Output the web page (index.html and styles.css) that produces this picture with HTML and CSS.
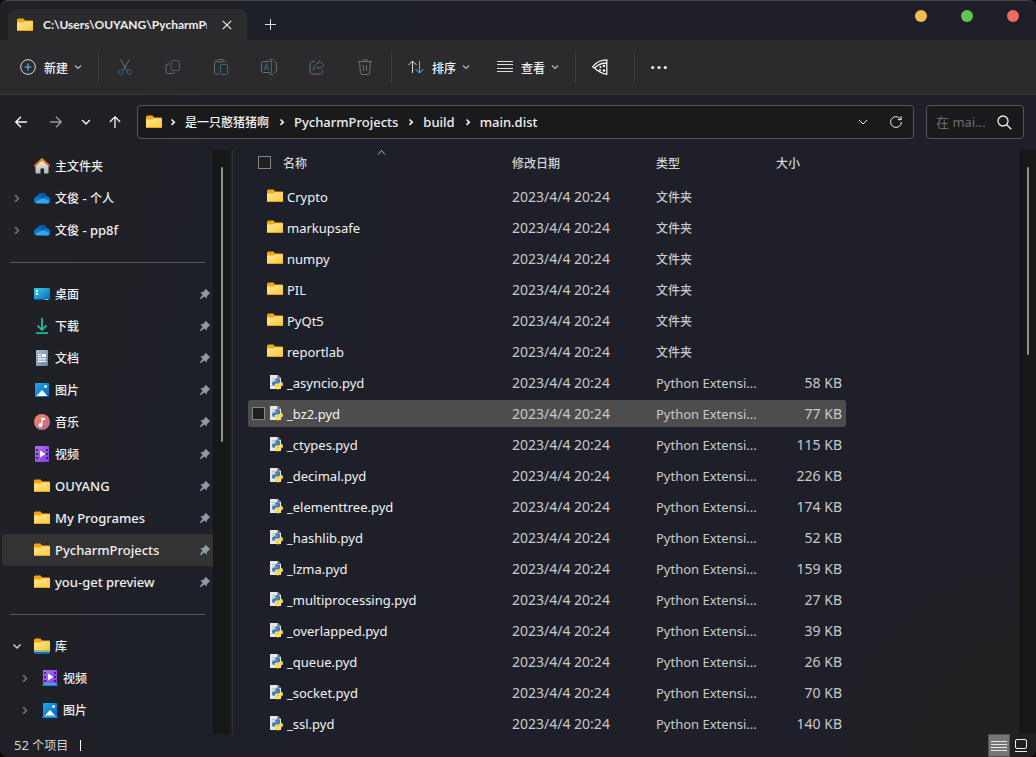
FILE: index.html
```html
<!DOCTYPE html>
<html lang="zh-CN">
<head>
<meta charset="utf-8">
<title>main.dist</title>
<link rel="stylesheet" href="styles.css">
</head>
<body>
<svg class="defs" aria-hidden="true">
  <defs>
    <linearGradient id="gFolder" x1="0" y1="0" x2="1" y2="1"><stop offset="0" stop-color="#ffe79c"/><stop offset="1" stop-color="#fdc735"/></linearGradient>
    <linearGradient id="gDesk" x1="0" y1="0" x2="1" y2="1"><stop offset="0" stop-color="#35d0ea"/><stop offset="1" stop-color="#0c62b8"/></linearGradient>
    <linearGradient id="gDoc" x1="0" y1="0" x2="1" y2="1"><stop offset="0" stop-color="#a9bfd3"/><stop offset="1" stop-color="#6584a6"/></linearGradient>
    <linearGradient id="gPic" x1="0" y1="0" x2="1" y2="1"><stop offset="0" stop-color="#22a7ee"/><stop offset="1" stop-color="#0864b8"/></linearGradient>
    <linearGradient id="gMusic" x1="0" y1="0" x2="1" y2="1"><stop offset="0" stop-color="#f58b52"/><stop offset="1" stop-color="#b9639f"/></linearGradient>
    <linearGradient id="gVideo" x1="0" y1="0" x2="1" y2="1"><stop offset="0" stop-color="#b171f0"/><stop offset="1" stop-color="#7f3fe0"/></linearGradient>
    <linearGradient id="gHome" x1="0" y1="0" x2="0" y2="1"><stop offset="0" stop-color="#eeeeee"/><stop offset="1" stop-color="#b4b4b4"/></linearGradient>
    <linearGradient id="gRoof" x1="0" y1="0" x2="0" y2="1"><stop offset="0" stop-color="#fb9a1c"/><stop offset="1" stop-color="#d4500f"/></linearGradient>
  </defs>
  <symbol id="folder" viewBox="0 0 16 16"><path d="M0 3q0-1.500 1.500-1.500H6.500L8 3.500h7q1 0 1 1V10H0z" fill="#f3a90c"/><path d="M0 5.500h6.500L8 4.200h7.500q.5 0 .5.5V13q0 1-1 1H1q-1 0-1-1z" fill="url(#gFolder)"/><path d="M0 13h16q0 1-1 1H1q-1 0-1-1z" fill="#e9a520"/></symbol>
  <symbol id="library" viewBox="0 0 16 16"><use href="#folder" y="-1"/><path d="M0 13h16v1.500H0z" fill="#45c6f3"/><path d="M1 14.500h14V16H1z" fill="#0a6dbd"/></symbol>
  <symbol id="home" viewBox="0 0 16 16"><path d="M1.500 7.500 8 2l6.500 5.500V14.500q0 1-1 1H10v-5H6.500v5H2.500q-1 0-1-1z" fill="url(#gHome)"/><path d="M8 0 0 7v2.300L8 2.800l8 6.500V7z" fill="url(#gRoof)"/></symbol>
  <symbol id="cloud" viewBox="0 0 16 16"><path d="M3.500 13.500Q0 13 0 10 0 7 3 6.500 4.500 3 8 3q4 0 5 3.500 3 .4 3 3.400 0 3.600-3 3.600z" fill="#1074d0"/><path d="M4 5.500Q6 2.500 9 3q3.200.5 4 3.600L8 8.500z" fill="#0a59a9"/><path d="M2.500 13.300q-1.200-.6-1.500-1.600L9.500 8l6 3.300q-.4 2.200-2.700 2.200z" fill="#2fa6ee"/></symbol>
  <symbol id="desktop" viewBox="0 0 16 16"><rect y="2" width="16" height="12" rx="1" fill="url(#gDesk)"/><path d="M0 13h10v1H1q-1 0-1-1z" fill="#0b549c"/><path d="M2 4h2v2H2zM2 7h2v2H2zM11 13h1v1h-1zM13 13h1v1h-1z" fill="#fff"/></symbol>
  <symbol id="download" viewBox="0 0 16 16"><path d="M3.500 7.500 8 12l4.500-4.500" fill="none" stroke="#24b593" stroke-width="1.800"/><path d="M2 14.200h12V16H2z" fill="#20b498"/><path d="M7.100 0h1.800v12H7.100z" fill="#2fbf91"/></symbol>
  <symbol id="document" viewBox="0 0 16 16"><rect x="2" width="12" height="16" rx="1" fill="url(#gDoc)"/><path d="M4 4h3v1H4zM4 6h3v1H4zM8 4h4v3H8zM4 8.300h8v1.200H4zM4 10.800h8V12H4z" fill="#fff"/></symbol>
  <symbol id="picture" viewBox="0 0 16 16"><rect x="1" y="1" width="14" height="14" rx="1" fill="url(#gPic)"/><path d="m2.500 14 5.500-6 5.500 6z" fill="#fff"/><circle cx="11.500" cy="4.500" r="1.500" fill="#e6f6ff"/></symbol>
  <symbol id="music" viewBox="0 0 16 16"><circle cx="8" cy="8" r="8" fill="url(#gMusic)"/><path d="M7.300 3.500 11 4.300v2L8.500 5.800V11a2 2 0 1 1-1.200-1.700z" fill="#fff"/></symbol>
  <symbol id="video" viewBox="0 0 16 16"><rect x="1" width="14" height="16" rx="1" fill="url(#gVideo)"/><path d="M2 3h2v2H2zM2 7h2v2H2zM2 11h2v2H2zM12 3h2v2h-2zM12 7h2v2h-2zM12 11h2v2h-2z" fill="#43207d"/><path d="m6 4.500 5.500 3.500L6 11.500z" fill="#fff"/></symbol>
  <symbol id="lib-video" viewBox="0 0 16 16"><use href="#video" y="-1"/><path d="M1 13.500h14l1 2.500H0z" fill="#1186d4"/><path d="M2 13.500h12v1H2z" fill="#5ccdf6"/></symbol>
  <symbol id="lib-picture" viewBox="0 0 16 16"><use href="#picture" y="0"/><path d="M1 13.500h14l1 2.500H0z" fill="#1186d4"/><path d="M2 13.500h12v1H2z" fill="#5ccdf6"/></symbol>
  <symbol id="pin" viewBox="0 0 12 12"><path d="M6.700.8 11.300 5.400 10 6l-2 2-.2 2.600L5.300 8.400 1.500 11.200.8 10.500l2.800-3.800L1.300 4.200 4 4l2-2z" fill="#8f9ba3"/></symbol>
  <symbol id="python" viewBox="0 0 16 16"><path d="M2 1h8l3 3v11H2z" fill="#e8e8e8"/><path d="M9.500.5 13 4H9.500z" fill="#666"/><path d="M4 4h3v1H4zM4 6h2v1H4z" fill="#b9c4cc"/><path d="M7 5.500Q7 4 9.500 4T12 5.500V8q0 1.500-1.500 1.500H8Q6.500 9.500 6.500 12H5.500Q4 11.500 4 9.500T6 7.300h3.500v-.6H7z" fill="#3d7cb3"/><path d="M12 13.500q0 2-2.300 2T7.300 13.700V11.500Q7.300 10 8.800 10h2.400Q12.700 10 12.700 7.700h.8Q15 8.200 15 10.200T13.300 12.600H10v.6h2z" fill="#ffd83d"/></symbol>
  <symbol id="chev-down" viewBox="0 0 8 8"><path d="m1 2.500 3 3 3-3" fill="none" stroke="currentColor" stroke-width="1.200"/></symbol>
  <symbol id="chev-right" viewBox="0 0 8 8"><path d="m2 0.500 3.500 3.500L2 7.500" fill="none" stroke="currentColor" stroke-width="1.500"/></symbol>
  <symbol id="crumb" viewBox="0 0 8 8"><path d="m2.500 1.500 2.800 2.700-2.800 2.700" fill="none" stroke="currentColor" stroke-width="1.600"/></symbol>
</svg>

<div class="window">
  <header class="titlebar">
    <div class="tab">
      <svg class="ico"><use href="#folder"/></svg>
      <span class="tab-title">C:\Users\OUYANG\PycharmProjects</span>
      <button class="plain tab-close" aria-label="关闭标签页"><svg viewBox="0 0 10 10" width="10" height="10"><path d="m.8.800 8.400 8.400M9.200.8.800 9.200" stroke="#eee" stroke-width="1.200" fill="none"/></svg></button>
    </div>
    <button class="plain tab-new" aria-label="新标签页"><svg viewBox="0 0 11 11" width="11" height="11"><path d="M5.500 0v11M0 5.500h11" stroke="#ddd" fill="none"/></svg></button>
    <div class="caption">
      <button class="dot dot-min" aria-label="最小化"></button>
      <button class="dot dot-max" aria-label="最大化"></button>
      <button class="dot dot-close" aria-label="关闭"></button>
    </div>
  </header>

  <div class="toolbar" role="toolbar">
    <button class="plain tool-text"><svg class="ico" viewBox="0 0 16 16" fill="none"><circle cx="8" cy="8" r="7.300" stroke="#ddd"/><path d="M8 4.500v7M4.500 8h7" stroke="#4cc2ff" stroke-width="1.200"/></svg>新建<svg class="chev"><use href="#chev-down"/></svg></button>
    <span class="sep"></span>
    <div class="tools">
      <button class="plain tool" aria-label="剪切" disabled><svg class="ico" viewBox="0 0 16 16" fill="none"><path d="m3.500.5 6.500 11M12.500.5 6 11.500" stroke="#6d6e72"/><circle cx="3.800" cy="13" r="2.300" stroke="#386a88"/><circle cx="12.200" cy="13" r="2.300" stroke="#386a88"/></svg></button>
      <button class="plain tool" aria-label="复制" disabled><svg class="ico" viewBox="0 0 16 16" fill="none"><rect x="6" y="1.500" width="8.500" height="10" rx="2" stroke="#386a88"/><path d="M4 5H3Q1 5 1 7v5.500Q1 14.500 3 14.500h4.500q2 0 2-1.500" stroke="#6d6e72"/></svg></button>
      <button class="plain tool" aria-label="粘贴" disabled><svg class="ico" viewBox="0 0 16 16" fill="none"><path d="M5 2H3Q1.500 2 1.500 3.500v10Q1.500 15 3 15h3M10 2h1.500Q13 2 13 3.500" stroke="#6d6e72"/><rect x="4.500" y=".5" width="6" height="2.500" rx="1" stroke="#6d6e72"/><rect x="7.500" y="5.500" width="7" height="10" rx="1" stroke="#386a88"/></svg></button>
      <button class="plain tool" aria-label="重命名" disabled><svg class="ico" viewBox="0 0 16 16" fill="none"><path d="M9 2.500H2.500Q.5 2.500 .5 4.500v7q0 2 2 2H9M13 2.500q2.500 0 2.500 2v7q0 2-2.500 2" stroke="#6d6e72"/><path d="m3 11.500 2.500-7 2.500 7M4 9h3M10.500 .5v15M8.500 .5h4M8.500 15.500h4" stroke="#386a88"/></svg></button>
      <button class="plain tool" aria-label="共享" disabled><svg class="ico" viewBox="0 0 16 16" fill="none"><path d="M6 2.500H3q-2 0-2 2V13q0 2 2 2h8.500q2 0 2-2v-1.500" stroke="#6d6e72"/><path d="M10 1.500 15 6l-5 4.500V8Q6 8 4 11q.5-6.500 6-7z" stroke="#386a88"/></svg></button>
      <button class="plain tool" aria-label="删除" disabled><svg class="ico" viewBox="0 0 16 16" fill="none"><path d="M1 2.500h14M5.500 2.500Q5.500.5 8 .5t2.500 2M2.500 3l1 11q.1 1.500 1.500 1.500h6q1.400 0 1.500-1.500l1-11M6.500 6v6M9.500 6v6" stroke="#6d6e72"/></svg></button>
    </div>
    <span class="sep"></span>
    <button class="plain tool-text"><svg class="ico" viewBox="0 0 16 16" fill="none"><path d="M4.500 14V2M.5 6l4-4 4 4" stroke="#ddd"/><path d="M11.500 2v12M7.500 10l4 4 4-4" stroke="#4cc2ff"/></svg>排序<svg class="chev"><use href="#chev-down"/></svg></button>
    <button class="plain tool-text tool-view"><svg class="ico" viewBox="0 0 16 16" fill="none"><path d="M0 2.500h16M0 5.500h16M0 9.500h16M0 12.500h16" stroke="#ddd"/></svg>查看<svg class="chev"><use href="#chev-down"/></svg></button>
    <span class="sep"></span>
    <button class="plain tool tool-pizza" aria-label="扩展"><svg class="ico" viewBox="0 0 16 16" fill="none"><path d="M14.800.8Q6 .8 1 7.300q-.3.700.3 1.200Q3 9 4 7.700 8 4 14.800 4zM14.800 1v14.300Q8 14.500 2.300 8.800" stroke="#f2f2f2" stroke-width="1.300"/><circle cx="8.500" cy="8" r="1.100" fill="#fff"/><circle cx="12" cy="7" r="1.200" fill="#fff"/><circle cx="8" cy="11" r="1" fill="#fff"/><circle cx="12" cy="11.500" r="1.300" fill="#fff"/></svg></button>
    <span class="sep"></span>
    <button class="plain tool tool-more" aria-label="更多"><svg class="ico" viewBox="0 0 16 16"><circle cx="1.700" cy="8.500" r="1.600" fill="#eee"/><circle cx="8" cy="8.500" r="1.600" fill="#eee"/><circle cx="14.300" cy="8.500" r="1.600" fill="#eee"/></svg></button>
  </div>

  <nav class="navbar">
    <div class="nav-buttons">
      <button class="plain" aria-label="后退"><svg viewBox="0 0 12 12" width="12" height="12" fill="none"><path d="M12 6H.8M6 .8.8 6 6 11.200" stroke="#f4f4f4" stroke-width="1.400"/></svg></button>
      <button class="plain" aria-label="前进"><svg viewBox="0 0 12 12" width="12" height="12" fill="none"><path d="M0 6h11.200M6 .8 11.200 6 6 11.200" stroke="#97989a" stroke-width="1.400"/></svg></button>
      <button class="plain nav-small" aria-label="最近位置"><svg viewBox="0 0 10 10" width="10" height="10" fill="none"><path d="m1.200 3 3.800 4 3.800-4" stroke="#f0f0f0" stroke-width="1.500"/></svg></button>
      <button class="plain nav-small" aria-label="上移"><svg viewBox="0 0 12 12" width="12" height="12" fill="none"><path d="M6 12V.8M.8 6 6 .8 11.200 6" stroke="#f4f4f4" stroke-width="1.300"/></svg></button>
    </div>
    <div class="address">
      <svg class="ico"><use href="#folder"/></svg>
      <svg class="crumb-sep"><use href="#crumb"/></svg><a href="#" class="cjk">是一只憨猪猪啊</a>
      <svg class="crumb-sep"><use href="#crumb"/></svg><a href="#">PycharmProjects</a>
      <svg class="crumb-sep"><use href="#crumb"/></svg><a href="#">build</a>
      <svg class="crumb-sep"><use href="#crumb"/></svg><a href="#">main.dist</a>
      <button class="plain address-drop" aria-label="历史"><svg viewBox="0 0 10 10" width="10" height="10" fill="none"><path d="m1 3 4 4 4-4" stroke="#eee"/></svg></button>
      <button class="plain" aria-label="刷新"><svg viewBox="0 0 12 12" width="12" height="12" fill="none"><path d="M11.400 6A5.400 5.400 0 1 1 9.800 2.200L11 3.500M11.200.2v3.500H7.700" stroke="#eee"/></svg></button>
    </div>
    <label class="search">
      <input type="text" placeholder="在 mai..." aria-label="在 main.dist 中搜索">
      <svg viewBox="0 0 15 15" width="15" height="15" fill="none"><circle cx="6" cy="6" r="5" stroke="#eee" stroke-width="1.300"/><path d="m9.700 9.700 4.600 4.600" stroke="#eee" stroke-width="1.400"/></svg>
    </label>
  </nav>

  <div class="main">
    <aside class="sidebar">
      <a href="#" class="item"><span class="twist"></span><svg class="ico"><use href="#home"/></svg><span class="cjk">主文件夹</span></a>
      <a href="#" class="item"><span class="twist"><svg><use href="#chev-right"/></svg></span><svg class="ico"><use href="#cloud"/></svg><span><span class="cjk">文俊</span> - <span class="cjk">个人</span></span></a>
      <a href="#" class="item"><span class="twist"><svg><use href="#chev-right"/></svg></span><svg class="ico"><use href="#cloud"/></svg><span><span class="cjk">文俊</span> - pp8f</span></a>
      <div class="divider"></div>
      <a href="#" class="item"><span class="twist"></span><svg class="ico"><use href="#desktop"/></svg><span class="cjk">桌面</span><svg class="pin"><use href="#pin"/></svg></a>
      <a href="#" class="item"><span class="twist"></span><svg class="ico"><use href="#download"/></svg><span class="cjk">下载</span><svg class="pin"><use href="#pin"/></svg></a>
      <a href="#" class="item"><span class="twist"></span><svg class="ico"><use href="#document"/></svg><span class="cjk">文档</span><svg class="pin"><use href="#pin"/></svg></a>
      <a href="#" class="item"><span class="twist"></span><svg class="ico"><use href="#picture"/></svg><span class="cjk">图片</span><svg class="pin"><use href="#pin"/></svg></a>
      <a href="#" class="item"><span class="twist"></span><svg class="ico"><use href="#music"/></svg><span class="cjk">音乐</span><svg class="pin"><use href="#pin"/></svg></a>
      <a href="#" class="item"><span class="twist"></span><svg class="ico"><use href="#video"/></svg><span class="cjk">视频</span><svg class="pin"><use href="#pin"/></svg></a>
      <a href="#" class="item"><span class="twist"></span><svg class="ico"><use href="#folder"/></svg><span>OUYANG</span><svg class="pin"><use href="#pin"/></svg></a>
      <a href="#" class="item"><span class="twist"></span><svg class="ico"><use href="#folder"/></svg><span>My Programes</span><svg class="pin"><use href="#pin"/></svg></a>
      <a href="#" class="item current"><span class="twist"></span><svg class="ico"><use href="#folder"/></svg><span>PycharmProjects</span><svg class="pin"><use href="#pin"/></svg></a>
      <a href="#" class="item"><span class="twist"></span><svg class="ico"><use href="#folder"/></svg><span>you-get preview</span><svg class="pin"><use href="#pin"/></svg></a>
      <div class="divider"></div>
      <a href="#" class="item"><span class="twist open"><svg><use href="#chev-right"/></svg></span><svg class="ico"><use href="#library"/></svg><span class="cjk">库</span></a>
      <a href="#" class="item child"><span class="twist"><svg><use href="#chev-right"/></svg></span><svg class="ico"><use href="#lib-video"/></svg><span class="cjk">视频</span></a>
      <a href="#" class="item child"><span class="twist"><svg><use href="#chev-right"/></svg></span><svg class="ico"><use href="#lib-picture"/></svg><span class="cjk">图片</span></a>
    </aside>
    <div class="scroll scroll-side"><div class="thumb thumb-side"></div></div>
    <section class="list">
      <svg class="sort-mark" viewBox="0 0 8 5" fill="none"><path d="m.5 4.500 3.500-4 3.500 4" stroke="#b5b5b5"/></svg>
      <table>
        <colgroup><col class="c-name"><col class="c-date"><col class="c-type"><col class="c-size"></colgroup>
        <thead><tr><th><div class="head-name"><input type="checkbox" aria-label="全选">名称</div></th><th>修改日期</th><th>类型</th><th>大小</th></tr></thead>
        <tbody>
          <tr><td><div class="name dir"><svg class="ico"><use href="#folder"/></svg>Crypto</div></td><td class="date">2023/4/4 20:24</td><td class="cjk">文件夹</td><td></td></tr>
          <tr><td><div class="name dir"><svg class="ico"><use href="#folder"/></svg>markupsafe</div></td><td class="date">2023/4/4 20:24</td><td class="cjk">文件夹</td><td></td></tr>
          <tr><td><div class="name dir"><svg class="ico"><use href="#folder"/></svg>numpy</div></td><td class="date">2023/4/4 20:24</td><td class="cjk">文件夹</td><td></td></tr>
          <tr><td><div class="name dir"><svg class="ico"><use href="#folder"/></svg>PIL</div></td><td class="date">2023/4/4 20:24</td><td class="cjk">文件夹</td><td></td></tr>
          <tr><td><div class="name dir"><svg class="ico"><use href="#folder"/></svg>PyQt5</div></td><td class="date">2023/4/4 20:24</td><td class="cjk">文件夹</td><td></td></tr>
          <tr><td><div class="name dir"><svg class="ico"><use href="#folder"/></svg>reportlab</div></td><td class="date">2023/4/4 20:24</td><td class="cjk">文件夹</td><td></td></tr>
          <tr><td><div class="name"><svg class="ico"><use href="#python"/></svg>_asyncio.pyd</div></td><td class="date">2023/4/4 20:24</td><td>Python Extensi...</td><td class="size">58 KB</td></tr>
          <tr class="hover"><td><div class="name"><input type="checkbox" aria-label="选择 _bz2.pyd"><svg class="ico"><use href="#python"/></svg>_bz2.pyd</div></td><td class="date">2023/4/4 20:24</td><td>Python Extensi...</td><td class="size">77 KB</td></tr>
          <tr><td><div class="name"><svg class="ico"><use href="#python"/></svg>_ctypes.pyd</div></td><td class="date">2023/4/4 20:24</td><td>Python Extensi...</td><td class="size">115 KB</td></tr>
          <tr><td><div class="name"><svg class="ico"><use href="#python"/></svg>_decimal.pyd</div></td><td class="date">2023/4/4 20:24</td><td>Python Extensi...</td><td class="size">226 KB</td></tr>
          <tr><td><div class="name"><svg class="ico"><use href="#python"/></svg>_elementtree.pyd</div></td><td class="date">2023/4/4 20:24</td><td>Python Extensi...</td><td class="size">174 KB</td></tr>
          <tr><td><div class="name"><svg class="ico"><use href="#python"/></svg>_hashlib.pyd</div></td><td class="date">2023/4/4 20:24</td><td>Python Extensi...</td><td class="size">52 KB</td></tr>
          <tr><td><div class="name"><svg class="ico"><use href="#python"/></svg>_lzma.pyd</div></td><td class="date">2023/4/4 20:24</td><td>Python Extensi...</td><td class="size">159 KB</td></tr>
          <tr><td><div class="name"><svg class="ico"><use href="#python"/></svg>_multiprocessing.pyd</div></td><td class="date">2023/4/4 20:24</td><td>Python Extensi...</td><td class="size">27 KB</td></tr>
          <tr><td><div class="name"><svg class="ico"><use href="#python"/></svg>_overlapped.pyd</div></td><td class="date">2023/4/4 20:24</td><td>Python Extensi...</td><td class="size">39 KB</td></tr>
          <tr><td><div class="name"><svg class="ico"><use href="#python"/></svg>_queue.pyd</div></td><td class="date">2023/4/4 20:24</td><td>Python Extensi...</td><td class="size">26 KB</td></tr>
          <tr><td><div class="name"><svg class="ico"><use href="#python"/></svg>_socket.pyd</div></td><td class="date">2023/4/4 20:24</td><td>Python Extensi...</td><td class="size">70 KB</td></tr>
          <tr><td><div class="name"><svg class="ico"><use href="#python"/></svg>_ssl.pyd</div></td><td class="date">2023/4/4 20:24</td><td>Python Extensi...</td><td class="size">140 KB</td></tr>
        </tbody>
      </table>
    </section>
    <div class="scroll scroll-list"><div class="thumb thumb-list"></div></div>
  </div>

  <footer class="status">
    <span class="count">52 <span class="cjk">个项目</span></span>
    <span class="status-sep"></span>
    <div class="views">
      <button class="plain view active" aria-label="详细信息"><svg class="ico" viewBox="0 0 16 16" fill="none"><path d="M0 3.500h16M0 6.500h16M0 9.500h16M0 12.500h16" stroke="#e4e4e4"/></svg></button>
      <button class="plain view" aria-label="大图标"><svg viewBox="0 0 12 13" width="12" height="13" fill="none"><rect x=".5" y=".5" width="11" height="9" rx="1.500" stroke="#eee"/><path d="M0 12.500h12" stroke="#eee"/></svg></button>
    </div>
  </footer>
</div>
</body>
</html>
```
FILE: styles.css
```css
* { box-sizing: border-box; }

body {
  margin: 0;
  background: #0b0b0c;
  color: #f0f0f0;
  font: 13px/20px "Noto Sans", "Noto Sans CJK SC", sans-serif;
}

a { color: inherit; text-decoration: none; }
svg { flex: none; display: block; }
.defs { position: absolute; width: 0; height: 0; }
.ico { width: 16px; height: 16px; }

.cjk,
th,
.tool-text {
  font-family: "Noto Sans CJK SC", sans-serif;
  font-size: 12px;
  font-weight: 500;
}

.plain {
  display: flex;
  align-items: center;
  justify-content: center;
  padding: 0;
  border: 0;
  background: none;
  color: inherit;
}

.window {
  display: grid;
  grid-template-rows: auto auto auto 1fr auto;
  height: 100vh;
  overflow: hidden;
  border-top: 1px solid #444648;
  border-radius: 8px;
  background:
    radial-gradient(circle at 100% 100%, #202022 0, #202022 100px, transparent 240px),
    linear-gradient(100deg, #202124 0, #1e2029 24%, #1e1f29 100%);
}

/* Title bar */
.titlebar { display: flex; height: 39px; padding-left: 8px; }
.tab {
  display: flex;
  align-items: center;
  width: 239px;
  margin-top: 8px;
  padding: 0 12px 0 9px;
  border-radius: 8px 8px 0 0;
  background: #2b2b2d;
}
.tab-title {
  flex: 1;
  min-width: 0;
  margin-left: 10px;
  overflow: hidden;
  white-space: nowrap;
  font-family: Lato, "Noto Sans", sans-serif;
  font-size: 12px;
  font-weight: 700;
}
.tab-close { width: 16px; height: 16px; margin-left: 12px; }
.tab-new { width: 32px; margin: 8px 0 0 7px; }
.caption { display: flex; gap: 34px; margin: 9px 17px 0 auto; }
.dot { width: 12px; height: 12px; padding: 0; border: 0; border-radius: 50%; }
.dot-min { background: #f4bd4f; }
.dot-max { background: #61c554; }
.dot-close { background: #ec6a5e; }

/* Toolbar */
.toolbar {
  display: flex;
  align-items: center;
  height: 55px;
  padding-left: 20px;
  border-bottom: 1px solid #3a3a3b;
  background: #2b2b2d;
}
.tool-text { gap: 8px; }
.chev { width: 8px; height: 8px; color: #b9b9b9; margin-left: -2px; }
.tool-view { margin-left: 27px; }
.sep { width: 1px; height: 32px; margin: 0 16px; background: #3d3d3f; }
.tools { display: flex; margin: 0 -14px; }
.tool { width: 48px; height: 32px; }
.tool-pizza { width: 16px; margin-right: 10px; }
.tool-more { width: 16px; }

/* Navigation */
.navbar { display: flex; align-items: center; padding: 10px 12px 11px 15px; }
.nav-buttons { display: flex; gap: 23px; width: 122px; }
.nav-small { margin-left: -4px; }
.nav-small ~ .nav-small { margin-left: -5px; }
.address {
  display: flex;
  align-items: center;
  flex: 1;
  height: 34px;
  padding: 0 11px 1px 8px;
  border: 1px solid #565656;
  border-radius: 4px;
  background: #1a1a1c;
}
.crumb-sep { width: 8px; height: 8px; margin: 0 8px 0 9px; }
.address .ico + .crumb-sep { margin-left: 7px; }
.address a { font-weight: 500; }
.address-drop { margin: 0 22px 0 auto; }
.search {
  display: flex;
  align-items: center;
  width: 98px;
  height: 34px;
  margin-left: 12px;
  padding: 0 11px 0 9px;
  border: 1px solid #565656;
  border-radius: 4px;
  background: #1a1a1c;
}
.search input {
  flex: 1;
  min-width: 0;
  padding: 0;
  border: 0;
  outline: 0;
  background: none;
  color: inherit;
  font: inherit;
}
.search input::placeholder { color: #6b6c6e; opacity: 1; }

/* Body */
.main { display: flex; min-height: 0; overflow: hidden; }
.sidebar { width: 213px; overflow: hidden; }
.item {
  display: flex;
  align-items: center;
  height: 32px;
  margin-left: 2px;
  padding-right: 2px;
  border-radius: 3px 0 0 3px;
  font-weight: 500;
}
.item .ico { margin-right: 5px; }
.item.current { background: #333333; }
.item.child { margin-left: 10px; }
.twist { width: 32px; padding-left: 11px; color: #77787b; }
.twist svg { width: 8px; height: 9px; }
.twist.open svg { color: #d0d0d0; transform: rotate(90deg); }
.pin { width: 12px; height: 12px; margin-left: auto; }
.divider { height: 32px; padding: 16px 8px 0 10px; }
.divider::before { content: ""; display: block; height: 1px; background: #56585d; }

.scroll { flex: none; width: 17px; padding-top: 17px; background: #171718; }
.thumb { width: 2px; margin-left: 8px; border-radius: 1px; background: #929292; }
.thumb-side { height: 275px; }
.thumb-list { height: 188px; }

.list {
  position: relative;
  flex: 1;
  min-width: 0;
  margin-left: 2px;
  padding-left: 15px;
  overflow: hidden;
  border-left: 1px solid #30302e;
}
.sort-mark { position: absolute; top: 0; left: 144px; width: 9px; height: 5px; }

table { table-layout: fixed; width: 598px; border-collapse: separate; border-spacing: 0 4px; }
.c-name { width: 264px; }
.c-date { width: 144px; }
.c-type { width: 120px; }
.c-size { width: 70px; }
th { height: 25px; padding: 0 0 8px; text-align: left; color: #d4d4d4; line-height: 17px; }
td { height: 27px; padding: 0; color: #c9c9c9; white-space: nowrap; }
.date { font-size: 14px; }
.size { padding-right: 4px; text-align: right; font-size: 14px; }
.name { display: flex; align-items: center; gap: 3px; padding-left: 20px; color: #f2f2f2; }
.name .ico { margin-bottom: 2px; }
.dir { gap: 4px; padding-left: 19px; }
.head-name { display: flex; align-items: center; gap: 12px; padding-left: 10px; }
.hover td { background: #4d4d4d; }
.hover td:first-child { border-radius: 3px 0 0 3px; }
.hover td:last-child { border-radius: 0 3px 3px 0; }
.hover .name { padding-left: 4px; }
input[type="checkbox"] {
  appearance: none;
  flex: none;
  width: 13px;
  height: 13px;
  margin: 0;
  border: 1px solid #858585;
  background: #202020;
}

/* Status bar */
.status { display: flex; align-items: center; height: 23px; padding: 0 0 0 14px; color: #d6d6d6; }
.status .cjk { font-weight: 400; }
.count { margin-bottom: 2px; }
.status-sep { width: 1px; height: 11px; margin-left: 12px; background: #fff; }
.views { display: flex; align-self: stretch; margin-left: auto; padding-right: 4px; }
.view { width: 22px; }
.view.active { border: 1px solid #505050; background: #777777; }
```
